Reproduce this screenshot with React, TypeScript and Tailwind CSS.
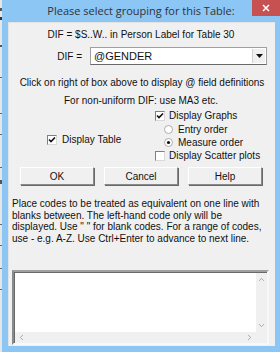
import { ChevronUp, ChevronDown, ChevronLeft, ChevronRight } from "lucide-react";

// --- small classic win controls ---
function CheckBox({ checked }: { checked?: boolean }) {
    return (
        <div className="w-[10px] h-[10px] bg-white border border-t-[#808080] border-l-[#808080] border-r-[#d8d8d8] border-b-[#d8d8d8] flex items-center justify-center shrink-0">
            {checked && (
                <svg width="8" height="8" viewBox="0 0 8 8">
                    <path d="M1 3.5 L3 5.5 L7 1.5" stroke="#111" strokeWidth="1.6" fill="none" />
                </svg>
            )}
        </div>
    );
}

function Radio({ checked }: { checked?: boolean }) {
    return (
        <svg width="9" height="9" viewBox="0 0 9 9" className="shrink-0">
            <circle cx="4.5" cy="4.5" r="4" fill="#fff" stroke="#9a9a9a" strokeWidth="0.8" />
            {checked && <circle cx="4.5" cy="4.5" r="1.6" fill="#111" />}
        </svg>
    );
}

function Btn({ label }: { label: string }) {
    return (
        <div className="w-[74px] h-[18px] bg-[#f0f0f0] border border-t-white border-l-white border-r-[#8a8a8a] border-b-[#8a8a8a] shadow-[1px_1px_0_#696969] flex items-center justify-center text-[10px] text-[#111]">
            {label}
        </div>
    );
}

const helpLines = [
    "Place codes to be treated as equivalent on one line with",
    "blanks between. The left-hand code only will be",
    "displayed. Use \" \" for blank codes. For a range of codes,",
    "use - e.g. A-Z. Use Ctrl+Enter to advance to next line.",
];

export default function App() {
    const font = { fontFamily: '"Liberation Sans", Arial, sans-serif' };
    return (
        <div className="w-[280px] h-[352px] flex overflow-hidden relative" style={font}>
            {/* sliver of window behind */}
            <div className="w-[2px] h-full bg-[#e6e6e6] flex flex-col">
                <div className="h-[8px]" />
                <div className="h-[3px] bg-[#555]" />
                <div className="h-[6px]" />
                <div className="h-[3px] bg-[#333]" />
                <div className="h-[25px]" />
                <div className="h-[2px] bg-[#555]" />
                <div className="h-[30px]" />
                <div className="h-[1px] bg-[#666]" />
                <div className="h-[35px]" />
                <div className="h-[1px] bg-[#666]" />
                <div className="h-[20px]" />
                <div className="h-[1px] bg-[#666]" />
                <div className="h-[32px]" />
                <div className="h-[1px] bg-[#666]" />
                <div className="h-[12px]" />
                <div className="h-[4px] bg-[#555]" />
                <div className="h-[40px]" />
                <div className="h-[1px] bg-[#666]" />
                <div className="h-[20px]" />
                <div className="h-[1px] bg-[#666]" />
                <div className="h-[22px]" />
                <div className="h-[1px] bg-[#666]" />
                <div className="h-[20px]" />
                <div className="h-[1px] bg-[#666]" />
            </div>

            {/* window frame */}
            <div className="flex-1 h-full bg-[#8cc6f5] flex flex-col pl-[6px] pr-[5px] pb-[6px]">
                <div className="h-[22px] shrink-0 flex items-center justify-center pr-[1px] pt-[1px] text-[11px] text-[#333]" style={{ fontFamily: '"Open Sans", "Noto Sans", sans-serif' }}>
                    Please select grouping for this Table:
                </div>

                {/* client area */}
                <div className="flex-1 min-h-0 overflow-hidden bg-[#f0f0f0] border-t border-l border-[#e3e3e3] flex flex-col text-[10px] text-[#111] leading-[13px]">
                    <div className="mt-[5px] h-[13px] text-center pr-[2px]">DIF = $S..W.. in Person Label for Table 30</div>

                    <div className="mt-[6px] flex items-center h-[18px]">
                        <div className="w-[81px] text-right pr-[8px]">DIF =</div>
                        <div className="w-[177px] h-[18px] bg-white border border-t-[#a0a0a0] border-l-[#a0a0a0] border-r-[#a0a0a0] border-b-[#696969] flex items-center">
                            <div className="flex-1 pl-[3px] text-[11px]">@GENDER</div>
                            <div className="w-[13px] h-[14px] mr-[1px] bg-[#f0f0f0] border-l border-[#d0d0d0] flex items-center justify-center">
                                <svg width="7" height="4" viewBox="0 0 7 4"><path d="M0 0 H7 L3.5 4 Z" fill="#111" /></svg>
                            </div>
                        </div>
                    </div>

                    <div className="mt-[11px] h-[13px] text-center whitespace-nowrap">Click on right of box above to display @ field definitions</div>
                    <div className="mt-[5px] h-[13px] text-center pr-[2px]">For non-uniform DIF: use MA3 etc.</div>

                    {/* options */}
                    <div className="flex mt-[2px]">
                        <div className="w-[146px] pl-[38px] pt-[24px] flex items-center gap-[5px] self-start">
                            <CheckBox checked />
                            <span className="leading-[13px]">Display Table</span>
                        </div>
                        <div className="flex flex-col">
                            <div className="flex items-center gap-[4px] h-[13px]">
                                <CheckBox checked />
                                <span>Display Graphs</span>
                            </div>
                            <div className="flex items-center gap-[5px] h-[13px] pl-[9px] mt-[1px]">
                                <Radio />
                                <span>Entry order</span>
                            </div>
                            <div className="flex items-center gap-[5px] h-[13px] pl-[9px]">
                                <Radio checked />
                                <span>Measure order</span>
                            </div>
                            <div className="flex items-center gap-[4px] h-[13px]">
                                <CheckBox />
                                <span>Display Scatter plots</span>
                            </div>
                        </div>
                    </div>

                    <div className="mt-[5px] pl-[11px] flex gap-[10px]">
                        <Btn label="OK" />
                        <Btn label="Cancel" />
                        <Btn label="Help" />
                    </div>

                    <div className="mt-[13px] pl-[3px] leading-[11.5px] whitespace-nowrap">
                        {helpLines.map((l) => (
                            <div key={l}>{l}</div>
                        ))}
                    </div>

                    {/* text area */}
                    <div className="mt-auto mb-[1px] ml-[3px] w-[257px] h-[75px] shrink-0 border-2 border-t-[#a0a0a0] border-l-[#8a8a8a] border-r-[#f8f8f8] border-b-[#f8f8f8] flex flex-col">
                        <div className="flex-1 flex border-t border-l border-[#696969]">
                            <div className="flex-1 bg-white" />
                            <div className="w-[11px] bg-[#f0f0f0] flex flex-col items-center justify-between py-[2px]">
                                <ChevronUp size={9} color="#909090" strokeWidth={2} />
                                <ChevronDown size={9} color="#909090" strokeWidth={2} />
                            </div>
                        </div>
                        <div className="h-[11px] flex border-l border-[#696969]">
                            <div className="flex-1 bg-[#f0f0f0] flex items-center justify-between px-[2px]">
                                <ChevronLeft size={9} color="#909090" strokeWidth={2} />
                                <ChevronRight size={9} color="#909090" strokeWidth={2} />
                            </div>
                            <div className="w-[11px] bg-[#f0f0f0]" />
                        </div>
                    </div>
                </div>
            </div>

            {/* close button */}
            <div className="absolute top-0 right-0 w-[28px] h-[16px] bg-[#c75050] flex items-center justify-center">
                <svg width="8" height="8" viewBox="0 0 8 8">
                    <path d="M1 1 L7 7 M7 1 L1 7" stroke="#fff" strokeWidth="1.5" />
                </svg>
            </div>
        </div>
    );
}
